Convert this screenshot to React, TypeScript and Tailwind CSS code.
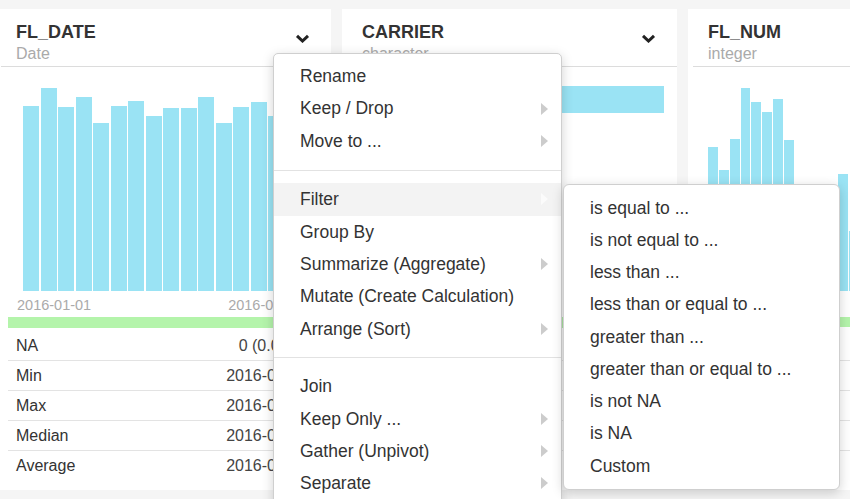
const dateBars = [185, 203, 184, 194, 168, 185, 190, 175, 183, 183, 194, 168, 184, 189, 175, 183, 194]
const numBars = [144, 121, 152, 203, 189, 179, 192, 151, 0, 0, 0, 0, 117, 60]

const stats = [
  ["NA", "0 (0.00%)"],
  ["Min", "2016-01-01"],
  ["Max", "2016-01-31"],
  ["Median", "2016-01-16"],
  ["Average", "2016-01-16"],
]

const menuSections = [
  [
    { label: "Rename" },
    { label: "Keep / Drop", sub: true },
    { label: "Move to ...", sub: true },
  ],
  [
    { label: "Filter", sub: true, active: true },
    { label: "Group By" },
    { label: "Summarize (Aggregate)", sub: true },
    { label: "Mutate (Create Calculation)" },
    { label: "Arrange (Sort)", sub: true },
  ],
  [
    { label: "Join" },
    { label: "Keep Only ...", sub: true },
    { label: "Gather (Unpivot)", sub: true },
    { label: "Separate", sub: true },
  ],
]

const filterItems = [
  "is equal to ...",
  "is not equal to ...",
  "less than ...",
  "less than or equal to ...",
  "greater than ...",
  "greater than or equal to ...",
  "is not NA",
  "is NA",
  "Custom",
]

function Chevron() {
  return (
    <svg width="15" height="9" viewBox="0 0 15 9" fill="none" className="mt-[13px] shrink-0">
      <polyline points="2,1.8 7.5,7 13,1.8" stroke="#222" strokeWidth="3" />
    </svg>
  )
}

function Arrow({ light }: { light?: boolean }) {
  return (
    <svg width="7" height="12" viewBox="0 0 7 12">
      <polygon points="0,0 7,6 0,12" fill={light ? "#fbfbfb" : "#cccccc"} />
    </svg>
  )
}

function Header({ name, type }: { name: string; type: string }) {
  return (
    <div className="ml-[5px] flex items-start justify-between border-b border-[#dcdcdc] pl-[15px] pr-[21px] pt-[12px] pb-[3px]">
      <div>
        <div className="text-[18px] leading-[22px] font-bold text-[#333]">{name}</div>
        <div className="mt-[2px] text-[16px] leading-[18px] text-[#aaa]">{type}</div>
      </div>
      <Chevron />
    </div>
  )
}

// summary block under each chart; the texts only show in the first card,
// the other two are covered by the menus
function Stats({ withText }: { withText?: boolean }) {
  return (
    <>
      <div className="mx-3 mt-[3.5px] h-[10.5px] bg-[#b4f4ab]" />
      <div className="mx-3 mt-[3.5px] pb-[8.5px]">
        {stats.map(([k, v], i) => (
          <div
            key={k}
            className={`flex h-[30px] items-center justify-between px-2 pr-[11px] text-[16px] text-[#333] ${i < stats.length - 1 ? "border-b border-[#e3e3e3]" : ""}`}
          >
            {withText && <span>{k}</span>}
            {withText && <span className="text-[#444]">{v}</span>}
          </div>
        ))}
      </div>
    </>
  )
}

export default function App() {
  return (
    <div className="relative h-[499px] w-[850px] overflow-hidden bg-[#f5f5f5] font-['Liberation_Sans',Arial,sans-serif]">
      <div className="ml-[-4px] flex gap-[11px] pt-[9px]">
        {/* FL_DATE */}
        <div className="w-[335px] shrink-0 bg-white">
          <Header name="FL_DATE" type="Date" />
          <div className="mt-[19px] flex h-[205px] items-end gap-[1.5px] pl-[27px]">
            {dateBars.map((h, i) => (
              <div key={i} className="w-[16px] bg-[#9ae3f4]" style={{ height: h }} />
            ))}
          </div>
          <div className="mt-[5.5px] flex pl-[21px] text-[14.5px] leading-[17px] text-[#aaa]">
            <span>2016-01-01</span>
            <span className="ml-[137px]">2016-01-16</span>
          </div>
          <Stats withText />
        </div>

        {/* CARRIER */}
        <div className="w-[335px] shrink-0 bg-white">
          <Header name="CARRIER" type="character" />
          <div className="mt-[19px] ml-[27px] mr-[13px] h-[26.5px] bg-[#9ae3f4]" />
          <div className="h-[178.5px]" />
          <div className="mt-[5.5px] h-[17px]" />
          <Stats />
        </div>

        {/* FL_NUM */}
        <div className="w-[335px] shrink-0 bg-white">
          <Header name="FL_NUM" type="integer" />
          <div className="mt-[19px] flex h-[204.5px] items-end gap-[1px] pl-[20px]">
            {numBars.map((h, i) => (
              <div key={i} className="w-[9.85px] bg-[#9ae3f4]" style={{ height: h }} />
            ))}
          </div>
          <div className="mt-[5.5px] h-[17px]" />
          <Stats />
        </div>
      </div>

      {/* column menu */}
      <div className="absolute left-[273px] top-[53px] w-[289px] h-[470px] rounded-[5px] border border-[#cfcfcf] bg-white pt-[6px] text-[17.5px] text-[#333] shadow-[0_3px_12px_rgba(0,0,0,0.18)]">
        {menuSections.map((sec, si) => (
          <div
            key={si}
            className={si === 0 ? "pb-[12.5px] border-b border-[#e2e2e2]" : si === 1 ? "pt-[12.5px] pb-[12px] border-b border-[#e2e2e2]" : "pt-[12px]"}
          >
            {sec.map((it) => (
              <div
                key={it.label}
                className={`flex h-[32.4px] items-center justify-between pl-[26px] pr-[13px] ${it.active ? "bg-[#f3f3f3]" : ""}`}
              >
                <span>{it.label}</span>
                {it.sub && <Arrow light={it.active} />}
              </div>
            ))}
          </div>
        ))}
      </div>

      {/* filter submenu */}
      <div className="absolute left-[563px] top-[184px] w-[277px] h-[306px] rounded-[6px] border border-[#cfcfcf] bg-white pt-[6.5px] text-[17.5px] text-[#333] shadow-[0_3px_12px_rgba(0,0,0,0.18)]">
        {filterItems.map((f) => (
          <div key={f} className="flex h-[32.25px] items-center pl-[26px]">
            {f}
          </div>
        ))}
      </div>
    </div>
  )
}
